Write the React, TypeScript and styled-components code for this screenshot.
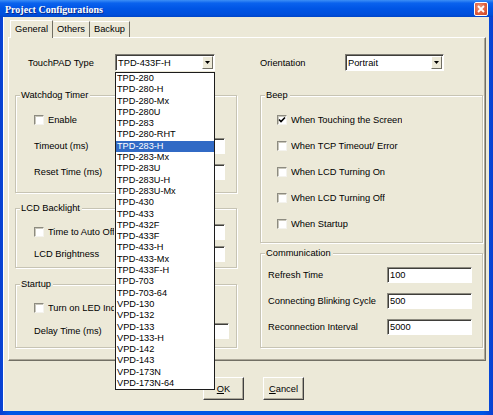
import React from "react";
import styled, { createGlobalStyle } from "styled-components";

const FACE = "#ece9d8";

const GlobalStyle = createGlobalStyle`
  html, body {
    margin: 0;
    padding: 0;
    background: #ffffff;
  }
  body {
    font-family: "Liberation Sans", Arial, sans-serif;
    font-size: 9.3px;
    color: #000;
  }
  * {
    box-sizing: border-box;
  }
`;

const touchPadTypes = [
  "TPD-280",
  "TPD-280-H",
  "TPD-280-Mx",
  "TPD-280U",
  "TPD-283",
  "TPD-280-RHT",
  "TPD-283-H",
  "TPD-283-Mx",
  "TPD-283U",
  "TPD-283U-H",
  "TPD-283U-Mx",
  "TPD-430",
  "TPD-433",
  "TPD-432F",
  "TPD-433F",
  "TPD-433-H",
  "TPD-433-Mx",
  "TPD-433F-H",
  "TPD-703",
  "TPD-703-64",
  "VPD-130",
  "VPD-132",
  "VPD-133",
  "VPD-133-H",
  "VPD-142",
  "VPD-143",
  "VPD-173N",
  "VPD-173N-64",
];

const beepOptions = [
  { label: "When Touching the Screen", checked: true },
  { label: "When TCP Timeout/ Error", checked: false },
  { label: "When LCD Turning On", checked: false },
  { label: "When LCD Turning Off", checked: false },
  { label: "When Startup", checked: false },
];

const commFields = [
  { label: "Refresh Time", value: "100" },
  { label: "Connecting Blinking Cycle", value: "500" },
  { label: "Reconnection Interval", value: "5000" },
];

function CheckBox({ checked }: { checked?: boolean }) {
  return (
    <StyledCheckBox>
      {checked && (
        <svg width="8" height="8" viewBox="0 0 8 8">
          <path d="M1 3.5 L3 5.5 L7 1.5" stroke="#000" strokeWidth="1.6" fill="none" />
        </svg>
      )}
    </StyledCheckBox>
  );
}

function ComboBox(props: { value: string; width: number; open?: boolean }) {
  const { value, width, open } = props;
  return (
    <StyledCombo $width={width}>
      <StyledComboValue>{value}</StyledComboValue>
      <StyledComboButton>
        <svg width="5" height="3" viewBox="0 0 5 3">
          <path d="M0 0 H5 L2.5 3 Z" fill="#000" />
        </svg>
      </StyledComboButton>
      {open && (
        <StyledDropList>
          {touchPadTypes.map((t) => (
            <StyledDropItem key={t} $selected={t === "TPD-283-H"}>
              {t}
            </StyledDropItem>
          ))}
        </StyledDropList>
      )}
    </StyledCombo>
  );
}

export default function App() {
  return (
    <>
      <GlobalStyle />
      <StyledWindow>
        <StyledTitleBar>
          <StyledTitle>Project Configurations</StyledTitle>
          <StyledCloseButton>
            <svg width="8" height="8" viewBox="0 0 8 8">
              <path d="M1 1 L7 7 M7 1 L1 7" stroke="#fff" strokeWidth="1.8" />
            </svg>
          </StyledCloseButton>
        </StyledTitleBar>

        <StyledFrame>
          <StyledTabStrip>
            <StyledTab $active>General</StyledTab>
            <StyledTab>Others</StyledTab>
            <StyledTab>Backup</StyledTab>
          </StyledTabStrip>

          <StyledPanel>
            <StyledTwoColumns>
              <StyledTopField $indent={13}>
                <StyledLabel $width={87}>TouchPAD Type</StyledLabel>
                <ComboBox value="TPD-433F-H" width={100} open />
              </StyledTopField>
              <StyledTopField $indent={0}>
                <StyledLabel $width={85}>Orientation</StyledLabel>
                <ComboBox value="Portrait" width={99} />
              </StyledTopField>
            </StyledTwoColumns>

            <StyledGroupColumns>
              <StyledColumn>
                <StyledGroup $height={98} $top={0}>
                  <StyledGroupTitle>Watchdog Timer</StyledGroupTitle>
                  <StyledGroupBody $pad={10} $gap={9} $indent={18}>
                    <StyledRow>
                      <CheckBox />
                      <StyledCheckText>Enable</StyledCheckText>
                    </StyledRow>
                    <StyledRow>
                      <StyledLabel $width={127}>Timeout (ms)</StyledLabel>
                      <StyledInput $width={64} defaultValue="" />
                    </StyledRow>
                    <StyledRow>
                      <StyledLabel $width={127}>Reset Time (ms)</StyledLabel>
                      <StyledInput $width={64} defaultValue="" />
                    </StyledRow>
                  </StyledGroupBody>
                </StyledGroup>

                <StyledGroup $height={60} $top={15}>
                  <StyledGroupTitle>LCD Backlight</StyledGroupTitle>
                  <StyledGroupBody $pad={9} $gap={5} $indent={18}>
                    <StyledRow>
                      <StyledCheckLabel $width={127}>
                        <CheckBox />
                        <StyledCheckText $clip={66}>Time to Auto Off</StyledCheckText>
                      </StyledCheckLabel>
                      <StyledInput $width={64} defaultValue="" />
                    </StyledRow>
                    <StyledRow>
                      <StyledLabel $width={127}>LCD Brightness</StyledLabel>
                      <StyledInput $width={64} defaultValue="" />
                    </StyledRow>
                  </StyledGroupBody>
                </StyledGroup>

                <StyledGroup $height={64} $top={16}>
                  <StyledGroupTitle>Startup</StyledGroupTitle>
                  <StyledGroupBody $pad={9} $gap={6} $indent={18}>
                    <StyledRow>
                      <CheckBox />
                      <StyledCheckText $clip={66}>Turn on LED Indicator</StyledCheckText>
                    </StyledRow>
                    <StyledRow>
                      <StyledLabel $width={127}>Delay Time (ms)</StyledLabel>
                      <StyledInput $width={68} defaultValue="" />
                    </StyledRow>
                  </StyledGroupBody>
                </StyledGroup>
              </StyledColumn>

              <StyledColumn>
                <StyledGroup $height={148} $top={0}>
                  <StyledGroupTitle>Beep</StyledGroupTitle>
                  <StyledGroupBody $pad={10} $gap={9} $indent={16}>
                    {beepOptions.map((o) => (
                      <StyledRow key={o.label}>
                        <CheckBox checked={o.checked} />
                        <StyledCheckText>{o.label}</StyledCheckText>
                      </StyledRow>
                    ))}
                  </StyledGroupBody>
                </StyledGroup>

                <StyledGroup $height={95} $top={10}>
                  <StyledGroupTitle>Communication</StyledGroupTitle>
                  <StyledGroupBody $pad={7} $gap={9} $indent={7}>
                    {commFields.map((f) => (
                      <StyledRow key={f.label}>
                        <StyledLabel $width={119}>{f.label}</StyledLabel>
                        <StyledInput $width={85} defaultValue={f.value} />
                      </StyledRow>
                    ))}
                  </StyledGroupBody>
                </StyledGroup>
              </StyledColumn>
            </StyledGroupColumns>
          </StyledPanel>

          <StyledFooter>
            <StyledButton>
              <u>O</u>K
            </StyledButton>
            <StyledButton>
              <u>C</u>ancel
            </StyledButton>
          </StyledFooter>
        </StyledFrame>
      </StyledWindow>
    </>
  );
}

const StyledWindow = styled.div`
  width: 493px;
  height: 415px;
  display: flex;
  flex-direction: column;
  background: linear-gradient(to right, #0a3fd0, #0055e5 2%, #0055e5 98%, #0a3fd0);
`;

const StyledTitleBar = styled.div`
  height: 17px;
  display: flex;
  align-items: center;
  justify-content: space-between;
  padding: 0 5px 0 5px;
  background: linear-gradient(
    to bottom,
    #3d8ff6 0%,
    #0a62ee 18%,
    #0055e5 50%,
    #004fdc 85%,
    #0046c8 100%
  );
`;

const StyledTitle = styled.span`
  font-family: "Liberation Serif", "Times New Roman", serif;
  font-weight: bold;
  font-size: 10px;
  color: #fff;
  text-shadow: 1px 1px 0 #0b2a8a;
  padding-top: 1px;
`;

const StyledCloseButton = styled.div`
  width: 14px;
  height: 14px;
  margin-top: 1px;
  display: flex;
  align-items: center;
  justify-content: center;
  border: 1px solid #fff;
  border-radius: 2px;
  background: radial-gradient(circle at 40% 35%, #f09a7e 0%, #e0603e 55%, #c84424 100%);
`;

const StyledFrame = styled.div`
  flex: 1;
  margin: 0 4px 4px 3px;
  padding: 3px 3px 0 5px;
  display: flex;
  flex-direction: column;
  background: ${FACE};
  box-shadow: inset 1px 0 0 #fff;
`;

const StyledTabStrip = styled.div`
  display: flex;
  align-items: flex-end;
  height: 17px;
  margin-left: 2px;
  position: relative;
  z-index: 1;
`;

const StyledTab = styled.div<{ $active?: boolean }>`
  height: ${(p) => (p.$active ? "18px" : "16px")};
  margin-bottom: ${(p) => (p.$active ? "-1px" : "0")};
  padding: ${(p) => (p.$active ? "2px 4px 0 4px" : "1px 4px 0 3px")};
  line-height: 13px;
  background: ${FACE};
  border-top: 1px solid #fff;
  border-left: 1px solid ${(p) => (p.$active ? "#fff" : "transparent")};
  border-right: 1px solid #716f64;
`;

const StyledPanel = styled.div`
  height: 324px;
  padding: 16px 3px 0 6px;
  border: 1px solid;
  border-color: #fff #716f64 #716f64 #fff;
  box-shadow: inset -1px -1px 0 #aca899;
`;

const StyledTwoColumns = styled.div`
  display: grid;
  grid-template-columns: 222px 223px;
  column-gap: 23px;
  height: 17px;
`;

const StyledTopField = styled.div<{ $indent: number }>`
  display: flex;
  align-items: center;
  padding-left: ${(p) => p.$indent}px;
`;

const StyledLabel = styled.span<{ $width: number }>`
  width: ${(p) => p.$width}px;
  flex-shrink: 0;
  white-space: nowrap;
`;

const StyledCombo = styled.div<{ $width: number }>`
  position: relative;
  width: ${(p) => p.$width}px;
  height: 17px;
  display: flex;
  align-items: center;
  background: #fff;
  border: 1px solid;
  border-color: #7f7d75 #fff #fff #7f7d75;
  box-shadow: inset 1px 1px 0 #3f3e3a;
`;

const StyledComboValue = styled.span`
  flex: 1;
  padding-left: 2px;
  white-space: nowrap;
`;

const StyledComboButton = styled.div`
  width: 11px;
  height: 13px;
  margin-right: 1px;
  display: flex;
  align-items: center;
  justify-content: center;
  background: ${FACE};
  border: 1px solid;
  border-color: #fff #716f64 #716f64 #fff;
`;

const StyledDropList = styled.div`
  position: absolute;
  top: 17px;
  left: -1px;
  width: 100px;
  padding: 0;
  background: #fff;
  border: 1px solid #1c1c1c;
  z-index: 10;
`;

const StyledDropItem = styled.div<{ $selected?: boolean }>`
  height: 11.3px;
  line-height: 11.3px;
  padding-left: 1px;
  font-size: 9.2px;
  white-space: nowrap;
  color: ${(p) => (p.$selected ? "#fff" : "#000")};
  background: ${(p) => (p.$selected ? "#316ac5" : "transparent")};
`;

const StyledGroupColumns = styled.div`
  display: grid;
  grid-template-columns: 222px 223px;
  column-gap: 23px;
  margin-top: 24px;
  align-items: start;
`;

const StyledColumn = styled.div`
  display: flex;
  flex-direction: column;
`;

const StyledGroup = styled.div<{ $height: number; $top: number }>`
  height: ${(p) => p.$height}px;
  margin-top: ${(p) => p.$top}px;
  display: flex;
  flex-direction: column;
  border: 1px solid #c7c4b4;
  box-shadow: inset 1px 1px 0 #fff, 1px 1px 0 #fff;
`;

const StyledGroupTitle = styled.span`
  align-self: flex-start;
  margin: -6px 0 0 4px;
  padding: 0 2px 0 1px;
  line-height: 11px;
  background: ${FACE};
`;

const StyledGroupBody = styled.div<{ $pad: number; $gap: number; $indent: number }>`
  display: flex;
  flex-direction: column;
  padding-top: ${(p) => p.$pad}px;
  padding-left: ${(p) => p.$indent}px;
  gap: ${(p) => p.$gap}px;
`;

const StyledRow = styled.div`
  height: 17px;
  display: flex;
  align-items: center;
`;

const StyledCheckLabel = styled.div<{ $width: number }>`
  width: ${(p) => p.$width}px;
  display: flex;
  align-items: center;
  flex-shrink: 0;
`;

const StyledCheckBox = styled.span`
  width: 10px;
  height: 10px;
  flex-shrink: 0;
  display: flex;
  align-items: center;
  justify-content: center;
  background: #fff;
  border: 1px solid;
  border-color: #8d8b80 #f4f3ee #f4f3ee #8d8b80;
  box-shadow: inset 1px 1px 0 #c9c7bb;
`;

const StyledCheckText = styled.span<{ $clip?: number }>`
  margin-left: 4px;
  white-space: nowrap;
  overflow: hidden;
  max-width: ${(p) => (p.$clip ? `${p.$clip}px` : "none")};
`;

const StyledInput = styled.input<{ $width: number }>`
  width: ${(p) => p.$width}px;
  height: 16px;
  padding: 0 0 0 2px;
  font-family: inherit;
  font-size: 9.3px;
  color: #000;
  background: #fff;
  border: 1px solid;
  border-color: #8d8b80 #fff #fff #8d8b80;
  box-shadow: inset 1px 1px 0 #3f3e3a;
  outline: none;
`;

const StyledFooter = styled.div`
  display: flex;
  gap: 19px;
  padding: 16px 0 0 195px;
`;

const StyledButton = styled.div`
  width: 41px;
  height: 23px;
  display: flex;
  align-items: center;
  justify-content: center;
  background: ${FACE};
  border: 1px solid;
  border-color: #fff #404040 #404040 #fff;
  box-shadow: inset -1px -1px 0 #aca899;
`;
